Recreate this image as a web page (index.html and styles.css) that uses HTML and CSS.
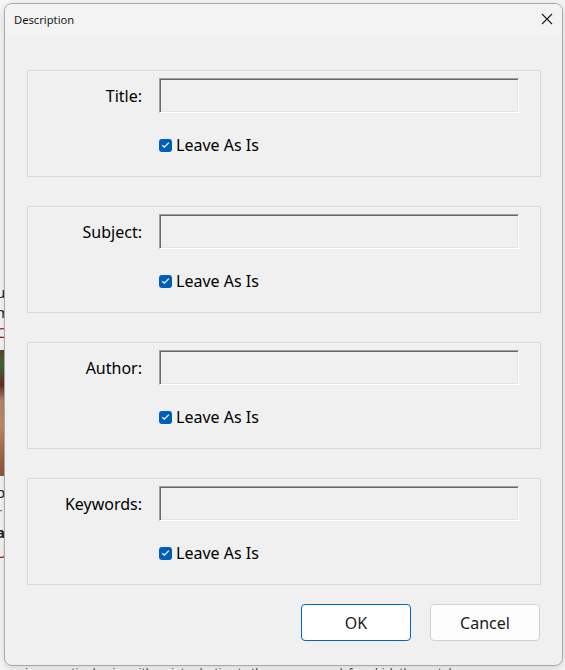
FILE: index.html
```html
<!DOCTYPE html>
<html>
<head>
<meta charset="utf-8">
<link rel="stylesheet" href="styles.css">
</head>
<body>
<div class="page">
  <div class="page-col">
    <div class="pl">uc</div>
    <div class="pl">m</div>
    <div class="pl red">C</div>
    <div class="pic"></div>
    <div class="pl">p</div>
    <div class="pl grey">r</div>
    <div class="pl bold">a</div>
    <div class="pl red">U</div>
    <div class="pl grey">i</div>
  </div>
  <div class="page-foot">a minor practice begins with an introduction to the common work for which the next day answer</div>
</div>

<div class="dialog">
  <div class="titlebar">
    <span class="title">Description</span>
    <svg class="close" width="12" height="12" viewBox="0 0 12 12"><path d="M1 1 L11 11 M11 1 L1 11" stroke="#1a1a1a" stroke-width="1.1" fill="none"/></svg>
  </div>
  <div class="content">
    <div class="group">
      <div class="row">
        <label class="lbl">Title:</label>
        <div class="field"></div>
      </div>
      <div class="row">
        <span class="lbl"></span>
        <div class="check"><span class="box"><svg width="9" height="8" viewBox="0 0 9 8"><path d="M1.2 4.2 L3.4 6.2 L7.8 1.6" stroke="#fff" stroke-width="1.2" fill="none"/></svg></span><span>Leave As Is</span></div>
      </div>
    </div>
    <div class="group">
      <div class="row">
        <label class="lbl">Subject:</label>
        <div class="field"></div>
      </div>
      <div class="row">
        <span class="lbl"></span>
        <div class="check"><span class="box"><svg width="9" height="8" viewBox="0 0 9 8"><path d="M1.2 4.2 L3.4 6.2 L7.8 1.6" stroke="#fff" stroke-width="1.2" fill="none"/></svg></span><span>Leave As Is</span></div>
      </div>
    </div>
    <div class="group">
      <div class="row">
        <label class="lbl">Author:</label>
        <div class="field"></div>
      </div>
      <div class="row">
        <span class="lbl"></span>
        <div class="check"><span class="box"><svg width="9" height="8" viewBox="0 0 9 8"><path d="M1.2 4.2 L3.4 6.2 L7.8 1.6" stroke="#fff" stroke-width="1.2" fill="none"/></svg></span><span>Leave As Is</span></div>
      </div>
    </div>
    <div class="group">
      <div class="row">
        <label class="lbl">Keywords:</label>
        <div class="field"></div>
      </div>
      <div class="row">
        <span class="lbl"></span>
        <div class="check"><span class="box"><svg width="9" height="8" viewBox="0 0 9 8"><path d="M1.2 4.2 L3.4 6.2 L7.8 1.6" stroke="#fff" stroke-width="1.2" fill="none"/></svg></span><span>Leave As Is</span></div>
      </div>
    </div>
    <div class="buttons">
      <button class="btn primary">OK</button>
      <button class="btn">Cancel</button>
    </div>
  </div>
</div>
</body>
</html>
```

FILE: styles.css
```css
*, *::before, *::after {
  box-sizing: border-box;
}
html, body {
  margin: 0;
  padding: 0;
}
body {
  width: 565px;
  height: 670px;
  overflow: hidden;
  background: #f6f6f6;
  font-family: "Noto Sans", "Open Sans", sans-serif;
  position: relative;
}
.page {
  height: 670px;
  display: flex;
  flex-direction: column;
  justify-content: space-between;
}
.page-col {
  padding-top: 282px;
  margin-left: -4px;
  display: flex;
  flex-direction: column;
  font-size: 15px;
  color: #222;
}
.pl {
  height: 20px;
  line-height: 20px;
}
.red { color: #9c1c2a; }
.grey { color: #777; }
.bold { font-weight: 700; }
.pic {
  margin: 8px 0 6px 0;
  width: 30px;
  height: 126px;
  background: linear-gradient(180deg, #5a4a2a 0%, #3d6a3a 12%, #6a2a22 28%, #b08868 40%, #c48a6a 60%, #a86a4a 80%, #8a5a3a 100%);
}
.page-foot {
  font-size: 11px;
  color: #333;
  white-space: nowrap;
  line-height: 10px;
  margin-bottom: -7px;
  padding-left: 6px;
}

.dialog {
  position: absolute;
  left: 4px;
  top: 3px;
  width: 559px;
  height: 663px;
  border: 1px solid #a9a9a9;
  border-radius: 8px;
  background: #f0f0f0;
  overflow: hidden;
  box-shadow: 0 2px 8px rgba(0,0,0,0.15);
  display: flex;
  flex-direction: column;
}
.titlebar {
  height: 33px;
  flex: none;
  background: #f3f3f3;
  display: flex;
  align-items: center;
  justify-content: space-between;
  padding: 0 9px 0 9px;
}
.title {
  font-size: 11.2px;
  color: #1a1a1a;
  font-family: "Noto Sans", sans-serif;
  margin-top: -2px;
}
.close {
  margin-top: -3px;
}
.content {
  padding: 33px 21px 0 22px;
  display: flex;
  flex-direction: column;
  gap: 29px;
}
.group {
  height: 107px;
  border: 1px solid #d9d9d9;
  padding: 7px 21px 0 0;
  display: flex;
  flex-direction: column;
  gap: 25px;
}
.row {
  display: flex;
  align-items: center;
  gap: 17px;
}
.lbl {
  width: 114px;
  text-align: right;
  font-size: 16px;
  color: #000;
}
.field {
  width: 360px;
  height: 35px;
  border: 1px solid;
  border-color: #a0a0a0 #ffffff #ffffff #a0a0a0;
  box-shadow: inset 1px 1px 0 #696969, inset -1px -1px 0 #e3e3e3;
  background: #f0f0f0;
}
.check {
  display: flex;
  align-items: center;
  gap: 4px;
  font-size: 16px;
  color: #000;
  height: 14px;
}
.box {
  width: 13px;
  height: 13px;
  border-radius: 3px;
  background: #005fb8;
  display: flex;
  align-items: center;
  justify-content: center;
}
.buttons {
  display: flex;
  justify-content: flex-end;
  gap: 19px;
  margin-top: -10px;
  margin-right: 1px;
}
.btn {
  width: 110px;
  height: 37px;
  background: #fdfdfd;
  border: 1px solid #d0d0d0;
  border-radius: 4px;
  font-family: "Noto Sans", sans-serif;
  font-size: 16px;
  color: #1a1a1a;
  padding: 0;
}
.btn.primary {
  border: 1px solid #0067c0;
  background: #ffffff;
}
```
